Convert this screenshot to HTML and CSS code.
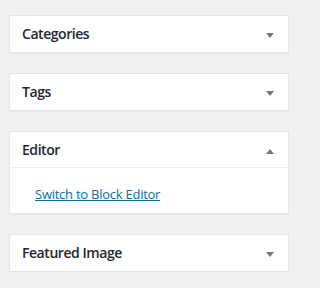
FILE: index.html
```html
<!DOCTYPE html>
<html>
<head>
<meta charset="utf-8">
<link rel="stylesheet" href="styles.css">
</head>
<body>
<div class="stack">
  <div class="postbox">
    <div class="hndle"><span class="title">Categories</span><svg class="arrow" width="8" height="5" viewBox="0 0 8 5"><polygon points="0,0 8,0 4,5" fill="#72777c"/></svg></div>
  </div>
  <div class="postbox">
    <div class="hndle"><span class="title">Tags</span><svg class="arrow" width="8" height="5" viewBox="0 0 8 5"><polygon points="0,0 8,0 4,5" fill="#72777c"/></svg></div>
  </div>
  <div class="postbox">
    <div class="hndle open"><span class="title">Editor</span><svg class="arrow" width="8" height="5" viewBox="0 0 8 5"><polygon points="0,5 8,5 4,0" fill="#72777c"/></svg></div>
    <div class="inside"><a class="link" href="#">Switch to Block Editor</a></div>
  </div>
  <div class="postbox">
    <div class="hndle"><span class="title">Featured Image</span><svg class="arrow" width="8" height="5" viewBox="0 0 8 5"><polygon points="0,0 8,0 4,5" fill="#72777c"/></svg></div>
  </div>
</div>
</body>
</html>
```
FILE: styles.css
```css
html, body {
  margin: 0;
  padding: 0;
  background: #f1f1f1;
}
body {
  font-family: "Open Sans", "Noto Sans", sans-serif;
  color: #23282d;
}
.stack {
  display: flex;
  flex-direction: column;
  gap: 20px;
  width: 280px;
  padding: 15px 0 0 9px;
}
.postbox {
  background: #fff;
  border: 1px solid #e5e5e5;
  box-shadow: 0 1px 1px rgba(0,0,0,0.04);
}
.hndle {
  height: 36px;
  display: flex;
  align-items: center;
  justify-content: space-between;
  padding: 0 14px 0 12px;
}
.hndle.open {
  border-bottom: 1px solid #eeeeee;
  height: 35px;
}
.title {
  font-size: 14px;
  font-weight: 600;
  line-height: 20px;
  letter-spacing: -0.45px;
}
.arrow {
  display: block;
  margin-top: 3px;
}
.inside {
  padding: 14px 12px 13px 25px;
  height: 18px;
}
.link {
  font-size: 13px;
  line-height: 18px;
  color: #0073aa;
  text-decoration: underline;
  letter-spacing: -0.25px;
}
```
